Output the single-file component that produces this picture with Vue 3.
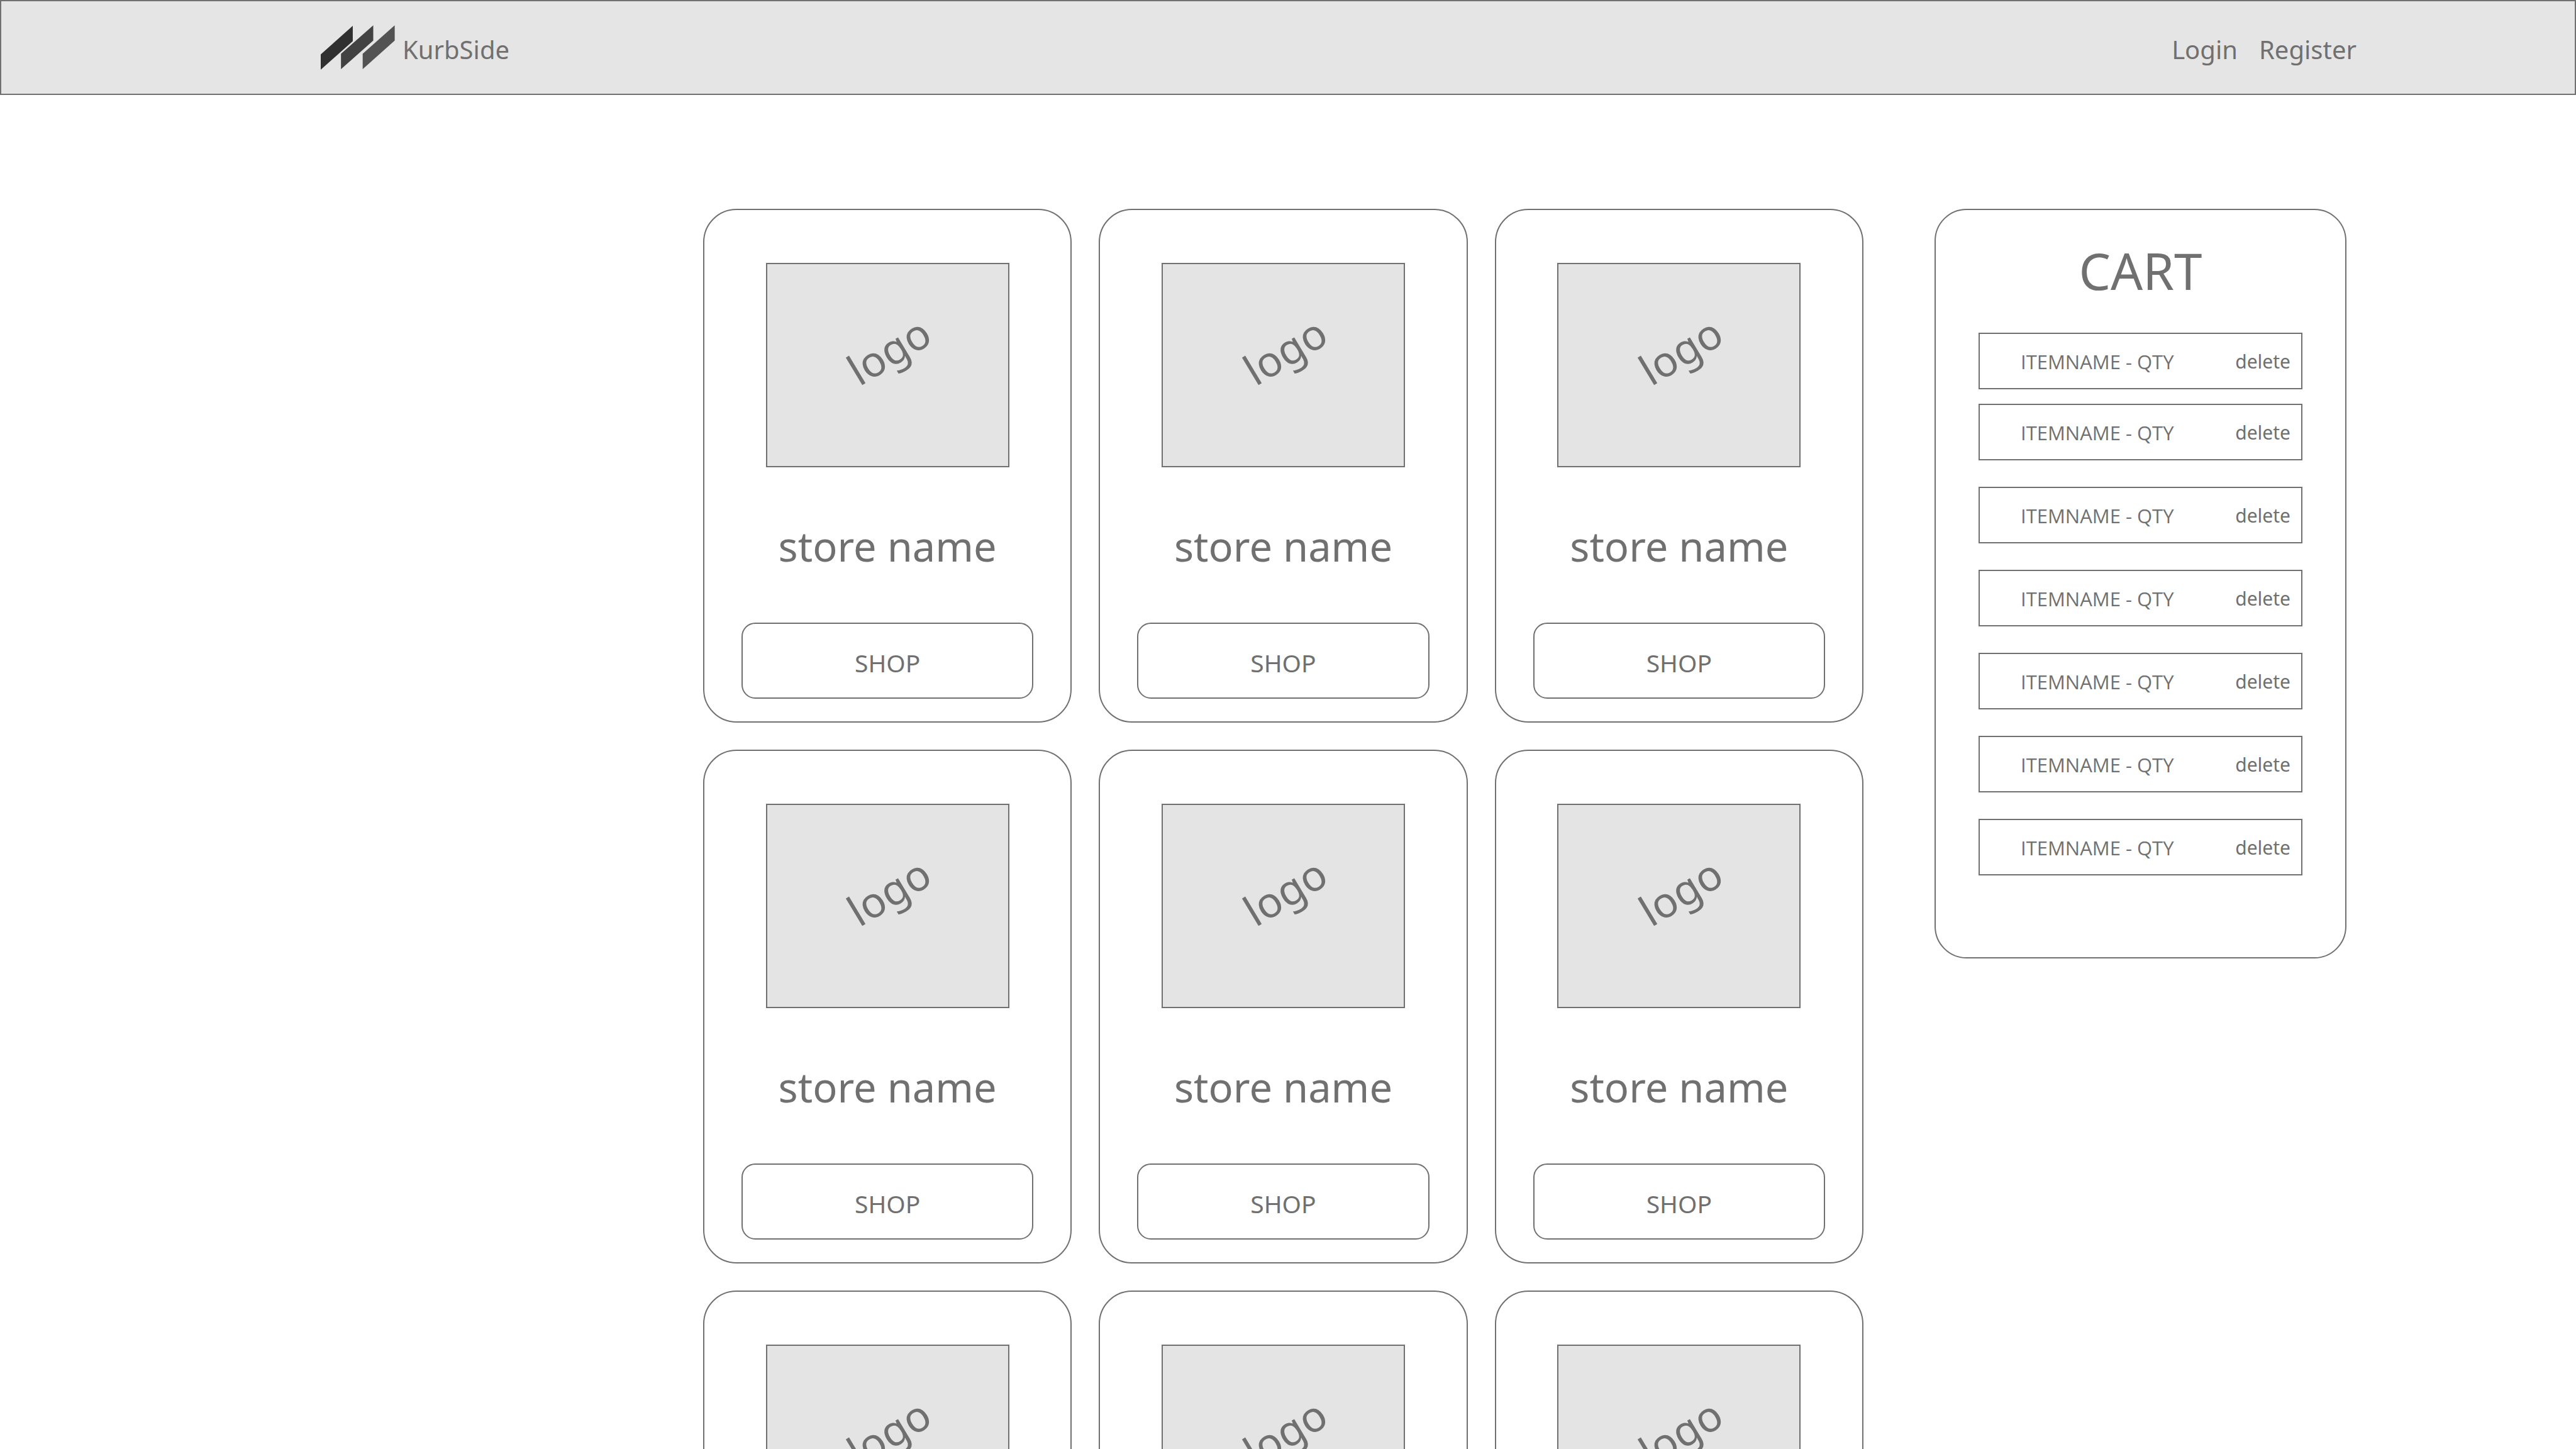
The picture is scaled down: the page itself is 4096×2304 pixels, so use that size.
<script setup>
const stores = Array.from({ length: 9 }, (_, i) => ({ id: i + 1, name: 'store name' }))
const cartItems = Array.from({ length: 7 }, (_, i) => ({ id: i + 1, label: 'ITEMNAME - QTY' }))
</script>

<template>
  <div class="page">
    <header class="topbar">
      <a class="brand" href="#">
        <svg class="mark" viewBox="0 0 154 92" aria-hidden="true">
          <polygon points="0,60.5 66.5,1 66.5,33 0,92" fill="#303030" />
          <polygon points="42,59 109,0 109,31.5 42,91" fill="#424242" />
          <polygon points="87,59 153.5,0 153.5,31.5 87,91" fill="#535353" />
        </svg>
        <span class="bar-text">KurbSide</span>
      </a>
      <nav class="account">
        <a class="bar-text" href="#login">Login</a>
        <a class="bar-text" href="#register">Register</a>
      </nav>
    </header>

    <main class="content">
      <section class="stores" aria-label="Stores">
        <article v-for="store in stores" :key="store.id" class="card">
          <div class="picture"><span class="picture-text">logo</span></div>
          <h2 class="name">{{ store.name }}</h2>
          <button class="shop" type="button">SHOP</button>
        </article>
      </section>

      <aside class="cart">
        <h1 class="cart-title">CART</h1>
        <ul class="items">
          <li v-for="item in cartItems" :key="item.id" class="item">
            <span class="item-label">{{ item.label }}</span>
            <button class="delete" type="button">delete</button>
          </li>
        </ul>
      </aside>
    </main>
  </div>
</template>

<style>
body {
  margin: 0;
  background: #fff;
}
</style>

<style scoped>
.page {
  height: 100vh;
  overflow-y: auto;
  scrollbar-width: none;
  color: #707070;
  font-family: "Noto Sans", "Open Sans", sans-serif;
}

.page *,
.page {
  box-sizing: border-box;
}

.topbar {
  display: flex;
  align-items: center;
  justify-content: space-between;
  height: 151px;
  padding: 0 347px 0 508px;
  border: 2px solid #707070;
  background: #e5e5e5;
}

.brand {
  display: flex;
  align-items: center;
  gap: 12px;
  color: inherit;
  text-decoration: none;
}

.mark {
  display: block;
  width: 118px;
  height: 71px;
}

.account {
  display: flex;
  gap: 34px;
}

.bar-text {
  padding-top: 6px;
  color: inherit;
  font-size: 40px;
  line-height: 56px;
  text-decoration: none;
}

.content {
  display: flex;
  align-items: flex-start;
  gap: 113px;
  padding: 181px 365px 43px 1118px;
}

.stores {
  display: grid;
  flex: 1;
  grid-template-columns: repeat(3, 1fr);
  gap: 43px;
}

.card {
  display: flex;
  flex-direction: column;
  align-items: center;
  padding: 84px 59px 36px;
  border: 2px solid #707070;
  border-radius: 53px;
}

.picture {
  display: flex;
  align-items: center;
  justify-content: center;
  width: 387px;
  height: 325px;
  padding: 0 0 48px 4px;
  border: 2px solid #707070;
  background: #e4e4e4;
}

.picture-text {
  font-size: 67px;
  line-height: 88px;
  transform: rotate(-31deg);
}

.name {
  margin: 81px 0 78px;
  font-size: 65px;
  font-weight: 400;
  line-height: 88px;
}

.shop {
  width: 100%;
  height: 121px;
  padding: 6px 0 0;
  border: 2px solid #707070;
  border-radius: 22px;
  background: transparent;
  color: inherit;
  font-family: inherit;
  font-size: 39px;
  line-height: 56px;
}

.cart {
  width: 655px;
  padding: 42px 68px 130px;
  border: 2px solid #707070;
  border-radius: 51px;
}

.cart-title {
  margin: 0 0 45px;
  font-size: 80px;
  font-weight: 400;
  line-height: 108px;
  text-align: center;
}

.items {
  margin: 0;
  padding: 0;
  list-style: none;
}

.item {
  display: flex;
  align-items: center;
  justify-content: space-between;
  height: 90px;
  margin-top: 42px;
  padding: 2px 17px 0 65px;
  border: 2px solid #707070;
  font-size: 31px;
  line-height: 42px;
}

.item:first-child {
  margin-top: 0;
}

.item:nth-child(2) {
  margin-top: 23px;
}

.item-label {
  font-family: "Open Sans", "Noto Sans", sans-serif;
}

.delete {
  padding: 0;
  border: 0;
  background: transparent;
  color: inherit;
  font-family: inherit;
  font-size: 30px;
  line-height: 42px;
}
</style>
